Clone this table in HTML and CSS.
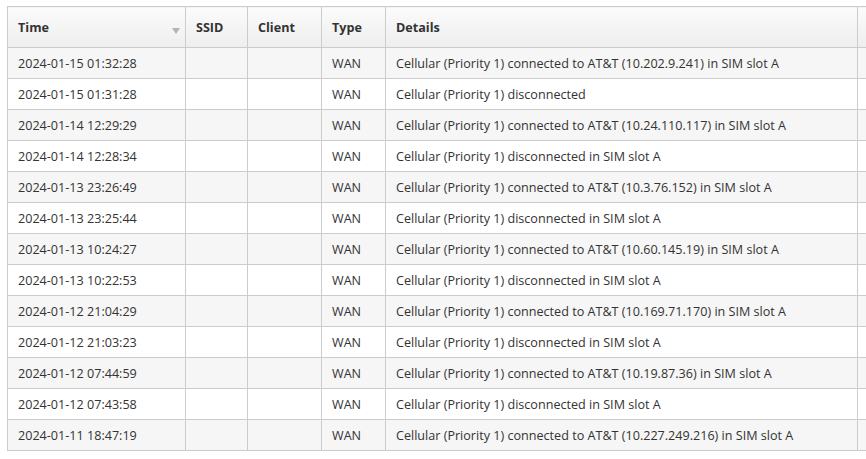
FILE: index.html
```html
<!DOCTYPE html>
<html>
<head>
<meta charset="utf-8">
<link rel="stylesheet" href="styles.css">
</head>
<body>
<div class="wrap">
<table class="log">
  <colgroup>
    <col class="c-time"><col class="c-ssid"><col class="c-client"><col class="c-type"><col class="c-details"><col class="c-extra">
  </colgroup>
  <thead>
    <tr>
      <th class="sortable">Time<span class="sort-arrow"></span></th>
      <th>SSID</th>
      <th>Client</th>
      <th>Type</th>
      <th>Details</th>
      <th></th>
    </tr>
  </thead>
  <tbody>
    <tr><td>2024-01-15 01:32:28</td><td></td><td></td><td>WAN</td><td>Cellular (Priority 1) connected to AT&amp;T (10.202.9.241) in SIM slot A</td><td></td></tr>
    <tr><td>2024-01-15 01:31:28</td><td></td><td></td><td>WAN</td><td>Cellular (Priority 1) disconnected</td><td></td></tr>
    <tr><td>2024-01-14 12:29:29</td><td></td><td></td><td>WAN</td><td>Cellular (Priority 1) connected to AT&amp;T (10.24.110.117) in SIM slot A</td><td></td></tr>
    <tr><td>2024-01-14 12:28:34</td><td></td><td></td><td>WAN</td><td>Cellular (Priority 1) disconnected in SIM slot A</td><td></td></tr>
    <tr><td>2024-01-13 23:26:49</td><td></td><td></td><td>WAN</td><td>Cellular (Priority 1) connected to AT&amp;T (10.3.76.152) in SIM slot A</td><td></td></tr>
    <tr><td>2024-01-13 23:25:44</td><td></td><td></td><td>WAN</td><td>Cellular (Priority 1) disconnected in SIM slot A</td><td></td></tr>
    <tr><td>2024-01-13 10:24:27</td><td></td><td></td><td>WAN</td><td>Cellular (Priority 1) connected to AT&amp;T (10.60.145.19) in SIM slot A</td><td></td></tr>
    <tr><td>2024-01-13 10:22:53</td><td></td><td></td><td>WAN</td><td>Cellular (Priority 1) disconnected in SIM slot A</td><td></td></tr>
    <tr><td>2024-01-12 21:04:29</td><td></td><td></td><td>WAN</td><td>Cellular (Priority 1) connected to AT&amp;T (10.169.71.170) in SIM slot A</td><td></td></tr>
    <tr><td>2024-01-12 21:03:23</td><td></td><td></td><td>WAN</td><td>Cellular (Priority 1) disconnected in SIM slot A</td><td></td></tr>
    <tr><td>2024-01-12 07:44:59</td><td></td><td></td><td>WAN</td><td>Cellular (Priority 1) connected to AT&amp;T (10.19.87.36) in SIM slot A</td><td></td></tr>
    <tr><td>2024-01-12 07:43:58</td><td></td><td></td><td>WAN</td><td>Cellular (Priority 1) disconnected in SIM slot A</td><td></td></tr>
    <tr><td>2024-01-11 18:47:19</td><td></td><td></td><td>WAN</td><td>Cellular (Priority 1) connected to AT&amp;T (10.227.249.216) in SIM slot A</td><td></td></tr>
  </tbody>
</table>
</div>
</body>
</html>
```
FILE: styles.css
```css
html, body {
  margin: 0;
  padding: 0;
  background: #ffffff;
  overflow: hidden;
}
body {
  font-family: "Open Sans", "Noto Sans", sans-serif;
  font-size: 12.6px;
  color: #333333;
}
.wrap {
  padding: 6px 0 0 7px;
  width: 1000px;
}
.log {
  border-collapse: collapse;
  table-layout: fixed;
  width: 951px;
}
.c-time { width: 178px; }
.c-ssid { width: 62px; }
.c-client { width: 74px; }
.c-type { width: 64px; }
.c-details { width: 472px; }
.c-extra { width: 101px; }
.log th, .log td {
  border: 1px solid #cccccc;
  text-align: left;
  padding: 0 10px;
  white-space: nowrap;
  overflow: hidden;
  vertical-align: middle;
}
.log th {
  height: 41px;
  font-weight: 700;
  color: #333333;
  background: linear-gradient(to bottom, #fbfbfb, #eeeeee);
  box-sizing: border-box;
}
.log th.sortable {
  position: relative;
}
.sort-arrow {
  position: absolute;
  right: 5px;
  top: 21px;
  width: 0;
  height: 0;
  border-left: 4px solid transparent;
  border-right: 4px solid transparent;
  border-top: 6px solid #b4b4b4;
}
.log td {
  height: 31px;
  box-sizing: border-box;
}
.log tbody tr:nth-child(odd) td {
  background: #f6f6f6;
}
```
